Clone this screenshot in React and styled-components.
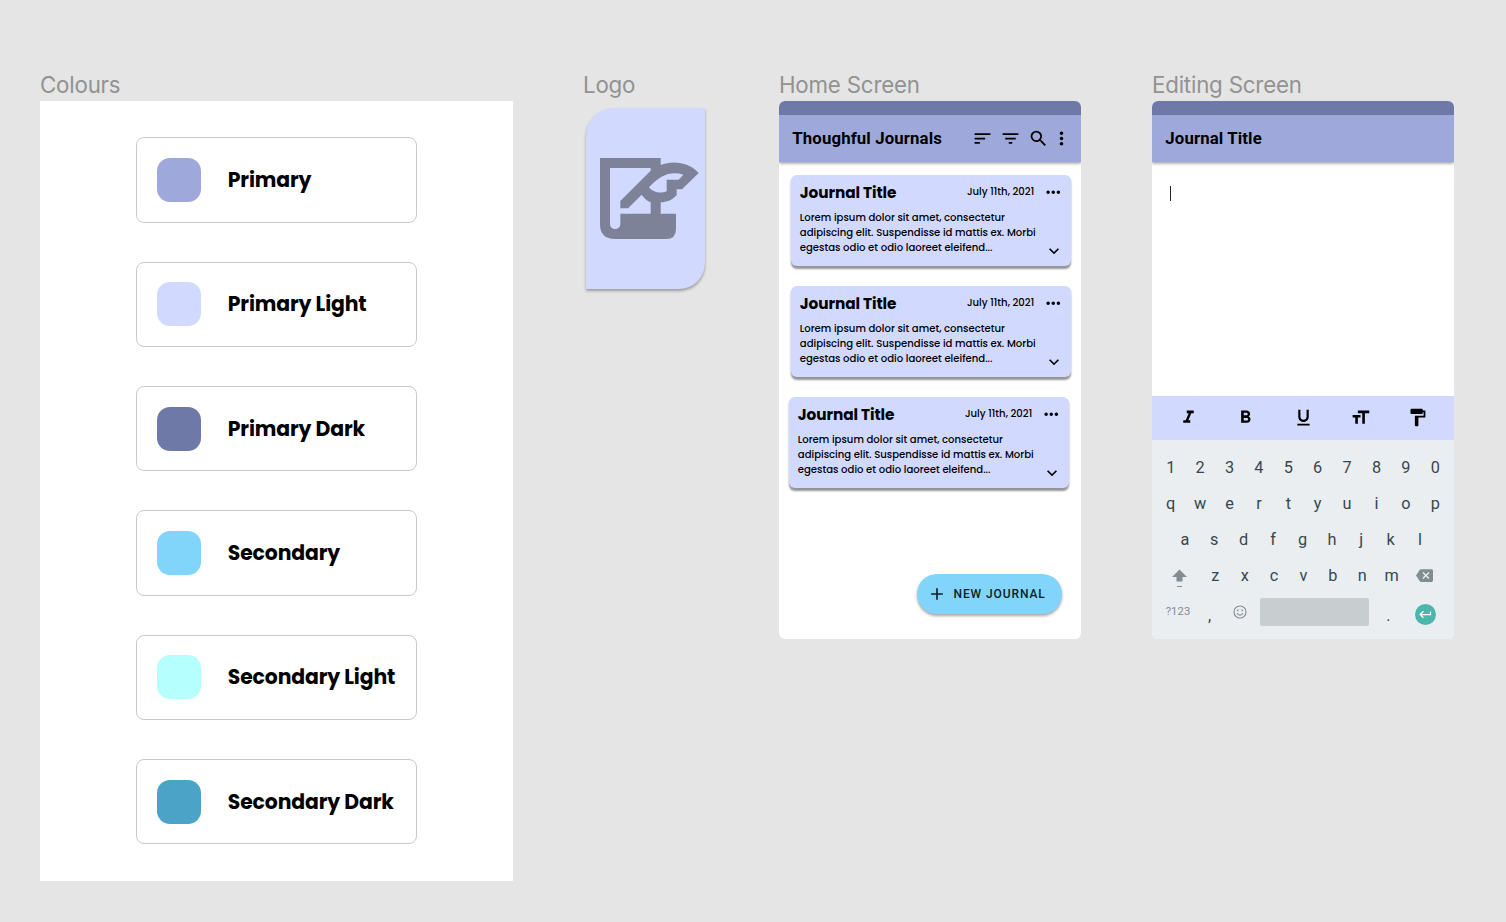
import React from 'react';
import styled, { createGlobalStyle } from 'styled-components';
import { MdSort, MdFilterList, MdSearch, MdMoreVert, MdMoreHoriz, MdExpandMore, MdAdd, MdFormatItalic, MdFormatBold, MdFormatUnderlined, MdFormatSize, MdFormatPaint, MdBackspace, MdKeyboardReturn } from 'react-icons/md';

const Global = createGlobalStyle`
  * { box-sizing: border-box; }
  body { margin: 0; background: #e5e5e5; }
`;

const Board = styled.main`
  display: grid;
  grid-template-columns: 543px 196px 373px 302px;
  align-items: start;
  width: 1506px;
  height: 922px;
  padding: 70px 0 0 40px;
  background: #e5e5e5;
  overflow: hidden;
`;

const Column = styled.section`
  display: flex;
  flex-direction: column;
  align-items: flex-start;
`;

const Label = styled.h2`
  margin: 0;
  height: 31px;
  font: 400 22.3px/30px Inter, sans-serif;
  letter-spacing: -0.2px;
  color: #929292;
  white-space: nowrap;
`;

const Palette = styled.div`
  display: flex;
  flex-direction: column;
  align-items: center;
  gap: 38.8px;
  width: 472.5px;
  height: 779.5px;
  padding: 36.4px 0 0;
  background: #fff;
`;

const Swatch = styled.div`
  display: flex;
  align-items: center;
  gap: 27px;
  width: 281px;
  height: 85.5px;
  padding-left: 20px;
  border: 1px solid #c9c9c9;
  border-radius: 8px;
`;

const Chip = styled.span`
  width: 44px;
  height: 44px;
  border-radius: 13px;
  background: ${(p) => p.$color};
`;

const poppins = `Poppins, Inter, sans-serif`;

const SwatchName = styled.span`
  font: 700 20.4px/30px ${poppins};
  letter-spacing: -0.13px;
  color: #000;
  white-space: nowrap;
`;

const LogoTile = styled.div`
  display: flex;
  width: 119px;
  height: 181px;
  margin: 7px 0 0 3.3px;
  padding: 49.7px 0 0 13.7px;
  border-radius: 28px 0 26px 0;
  background: #d1d9ff;
  box-shadow: 0 2px 3px rgba(0, 0, 0, 0.32);
`;

const Phone = styled.div`
  display: flex;
  flex-direction: column;
  width: 302px;
  height: 537.5px;
  border-radius: 6px;
  overflow: hidden;
  background: #fff;
`;

const StatusBar = styled.div`
  flex: none;
  height: 13.5px;
  background: #6f79a8;
`;

const AppBar = styled.header`
  display: flex;
  flex: none;
  align-items: center;
  height: 47.5px;
  padding: 0 8.8px 0 13.3px;
  background: #9fa8da;
  box-shadow: 0 1.5px 3px rgba(0, 0, 0, 0.38);
`;

const BarTitle = styled.h1`
  margin: 0;
  font: 700 16.8px/24px Roboto, sans-serif;
  letter-spacing: 0.12px;
  white-space: nowrap;
  color: #000;
`;

const BarActions = styled.div`
  display: flex;
  gap: 6.7px;
  margin-left: auto;
  color: #000;
  svg { display: block; }
  svg:last-child { margin-left: -4px; }
`;

const Cards = styled.div`
  display: flex;
  flex-direction: column;
  gap: 20px;
  padding: 13.3px 0 0 11.5px;
`;

const Card = styled.article`
  display: flex;
  flex-direction: column;
  width: 280px;
  height: 91px;
  margin-left: ${(p) => (p.$shifted ? '-2px' : '0')};
  padding: 6.3px 6.8px 0 9.3px;
  border-radius: 6px;
  background: #d1d9ff;
  box-shadow: 0 2.3px 2px rgba(0, 0, 0, 0.42);
  font-family: ${poppins};
  color: #000;
`;

const CardHead = styled.div`
  display: flex;
  align-items: center;
  height: 22px;
  svg { margin-top: -1.5px; }
`;

const CardTitle = styled.h3`
  margin: 0;
  font-size: 15.3px;
  line-height: 22px;
  font-weight: 700;
  letter-spacing: -0.08px;
  white-space: nowrap;
`;

const CardDate = styled.time`
  margin: -1.6px 9px 0 auto;
  font-size: 10.1px;
  line-height: 16px;
  font-weight: 500;
  white-space: nowrap;
`;

const CardBody = styled.div`
  display: flex;
  justify-content: space-between;
  padding-top: 6.3px;
`;

const Excerpt = styled.p`
  margin: 0;
  font-size: 10.1px;
  line-height: 15.1px;
  font-weight: 500;
`;

const Line = styled.span`
  display: block;
  white-space: nowrap;
`;

const Expand = styled(MdExpandMore)`
  align-self: flex-end;
  width: 20px;
  height: 20px;
  margin-bottom: -5.5px;
`;

const NewJournal = styled.button`
  display: flex;
  align-items: center;
  align-self: flex-end;
  gap: 7px;
  width: 145.5px;
  height: 40.5px;
  margin: auto 19px 24.5px 0;
  padding: 0 0 0 10px;
  border: 0;
  border-radius: 20.3px;
  background: #81d4fa;
  box-shadow: 0 2px 3px rgba(0, 0, 0, 0.35);
  font: 500 12px/16px Roboto, sans-serif;
  letter-spacing: 0.9px;
  color: #10202a;
  white-space: nowrap;
`;

const Editor = styled.div`
  flex: 1;
  padding: 24px 0 0 18px;
`;

const Caret = styled.div`
  width: 1px;
  height: 14.5px;
  background: #222;
`;

const Toolbar = styled.div`
  display: flex;
  flex: none;
  align-items: center;
  gap: 36.2px;
  height: 44px;
  padding: 0 0 1px 26.2px;
  background: #d1d9ff;
  color: #000;
  svg { flex: none; display: block; }
`;

const Keyboard = styled.div`
  flex: none;
  height: 198.5px;
  padding: 10px 4px 0;
  background: #eaeef1;
  font: 400 16.3px/36px Roboto, sans-serif;
  color: #37474f;
`;

const KeyRow = styled.div`
  display: flex;
  justify-content: center;
  align-items: center;
  height: 36px;
  padding-right: ${(p) => p.$inset || 0}px;
`;

const Key = styled.span`
  flex: none;
  width: 29.4px;
  text-align: center;
`;

const Glyph = styled.span`
  display: flex;
  flex: none;
  justify-content: center;
  width: ${(p) => p.$width}px;
  margin-top: ${(p) => p.$drop || 0}px;
  color: #818d91;
`;

const BottomRow = styled.div`
  display: flex;
  align-items: center;
  height: 36px;
`;

const ModeKey = styled.span`
  width: 44px;
  font-size: 11.2px;
  letter-spacing: 0.1px;
  text-align: center;
  color: #818d91;
`;

const Mark = styled.span`
  width: ${(p) => p.$width}px;
  padding-top: 7px;
  text-align: center;
`;

const Space = styled.span`
  width: 108.5px;
  height: 28px;
  border-radius: 2px;
  background: #c8cdd0;
`;

const Enter = styled.span`
  display: flex;
  align-items: center;
  justify-content: center;
  width: 21px;
  height: 21px;
  margin: 4px 0 0 6.5px;
  border-radius: 50%;
  background: #4db6ac;
  color: #fff;
`;

const swatches = [
  ['Primary', '#9fa8da'],
  ['Primary Light', '#d1d9ff'],
  ['Primary Dark', '#6f79a8'],
  ['Secondary', '#81d4fa'],
  ['Secondary Light', '#b6ffff'],
  ['Secondary Dark', '#4ba3c7'],
];

const excerpt = [
  'Lorem ipsum dolor sit amet, consectetur',
  'adipiscing elit. Suspendisse id mattis ex. Morbi',
  'egestas odio et odio laoreet eleifend...',
];

function LogoMark() {
  return (
    <svg width="98.7" height="81" viewBox="0 0 296 243" fill="#7d8299">
      <path fillRule="evenodd" d="M0 0H182V21C220 6 267 13 296 45L246 94H230V111C215 128 200 132 182 133V167H228V213Q228 243 198 243H45Q0 243 0 198ZM30 30V198C30 218 61 218 61 198V167H152V133Q137 127 125 110L84 151H61V129L152 38V30ZM147 88C162 107 183 106 200 100V65H236L250 50C215 38 180 50 147 88Z" />
    </svg>
  );
}

function JournalCard({ shifted }) {
  return (
    <Card $shifted={shifted}>
      <CardHead>
        <CardTitle>Journal Title</CardTitle>
        <CardDate>July 11th, 2021</CardDate>
        <MdMoreHoriz size={20.5} />
      </CardHead>
      <CardBody>
        <Excerpt>
          {excerpt.map((text) => <Line key={text}>{text}</Line>)}
        </Excerpt>
        <Expand />
      </CardBody>
    </Card>
  );
}

function Keys({ chars }) {
  return chars.split('').map((c) => <Key key={c}>{c}</Key>);
}

export default function App() {
  return (
    <>
      <Global />
      <Board>
        <Column>
          <Label>Colours</Label>
          <Palette>
            {swatches.map(([name, color]) => (
              <Swatch key={name}>
                <Chip $color={color} />
                <SwatchName>{name}</SwatchName>
              </Swatch>
            ))}
          </Palette>
        </Column>
        <Column>
          <Label>Logo</Label>
          <LogoTile><LogoMark /></LogoTile>
        </Column>
        <Column>
          <Label>Home Screen</Label>
          <Phone>
            <StatusBar />
            <AppBar>
              <BarTitle>Thoughful Journals</BarTitle>
              <BarActions>
                <MdSort size={21} />
                <MdFilterList size={21} />
                <MdSearch size={21} />
                <MdMoreVert size={21} />
              </BarActions>
            </AppBar>
            <Cards>
              <JournalCard />
              <JournalCard />
              <JournalCard shifted />
            </Cards>
            <NewJournal><MdAdd size={20} />NEW JOURNAL</NewJournal>
          </Phone>
        </Column>
        <Column>
          <Label>Editing Screen</Label>
          <Phone>
            <StatusBar />
            <AppBar><BarTitle>Journal Title</BarTitle></AppBar>
            <Editor><Caret /></Editor>
            <Toolbar>
              <MdFormatItalic size={21} />
              <MdFormatBold size={21} />
              <MdFormatUnderlined size={21} />
              <MdFormatSize size={21} />
              <MdFormatPaint size={21} />
            </Toolbar>
            <Keyboard>
              <KeyRow><Keys chars="1234567890" /></KeyRow>
              <KeyRow><Keys chars="qwertyuiop" /></KeyRow>
              <KeyRow $inset={1}><Keys chars="asdfghjkl" /></KeyRow>
              <KeyRow $inset={5}>
                <Glyph $width={42} $drop={5}>
                  <svg width="15" height="19" viewBox="0 0 15 19" fill="currentColor">
                    <path d="M7.5 .5L15 8H10.5V12.5H4.5V8H0ZM5 17h5v1H5Z" />
                  </svg>
                </Glyph>
                <Keys chars="zxcvbnm" />
                <Glyph $width={36} $drop={-1}><MdBackspace size={17} /></Glyph>
              </KeyRow>
              <BottomRow>
                <ModeKey>?123</ModeKey>
                <Mark $width={19}>,</Mark>
                <Glyph $width={41} $drop={-1}>
                  <svg width="14" height="14" viewBox="0 0 13 13" fill="none" stroke="currentColor">
                    <circle cx="6.5" cy="6.5" r="5.6" />
                    <path d="M3.7 7.7C4.8 10 8.2 10 9.3 7.7" />
                    <circle cx="4.5" cy="4.9" r=".8" fill="currentColor" stroke="none" />
                    <circle cx="8.5" cy="4.9" r=".8" fill="currentColor" stroke="none" />
                  </svg>
                </Glyph>
                <Space />
                <Mark $width={40}>.</Mark>
                <Enter><MdKeyboardReturn size={15} /></Enter>
              </BottomRow>
            </Keyboard>
          </Phone>
        </Column>
      </Board>
    </>
  );
}
